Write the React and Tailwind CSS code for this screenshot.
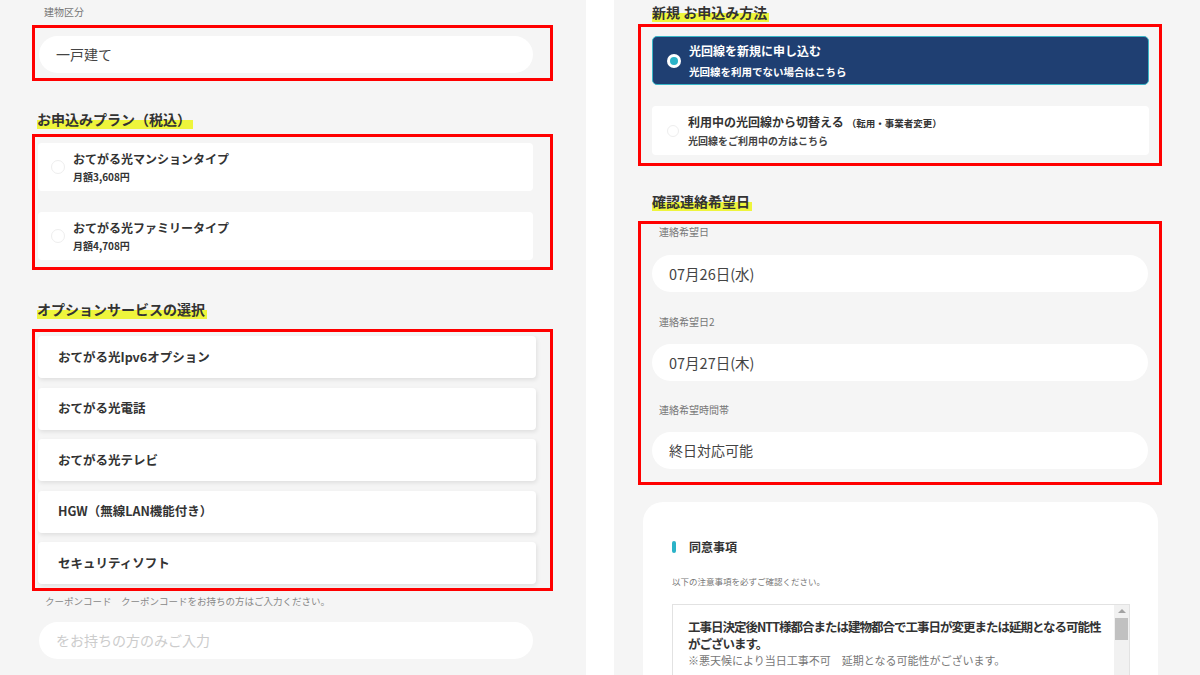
import React from "react";

const font = { fontFamily: '"Noto Sans CJK JP", "Noto Sans", sans-serif' };

const Heading = ({ children }) => (
    <h2 className="inline-block text-[14px] font-bold leading-[20px] text-[#333] bg-[linear-gradient(transparent_55%,#eef53c_55%)] pr-[2px]">
        {children}
    </h2>
);

const PlanCard = ({ title, price }) => (
    <div className="flex items-center h-[48px] bg-white rounded-[4px] pl-[13px]">
        <span className="w-[14px] h-[14px] rounded-full border border-[#eeeeee] bg-white"></span>
        <div className="ml-[8px] flex flex-col">
            <span className="text-[12px] font-bold leading-[18px] text-[#333]">{title}</span>
            <span className="mt-[1px] text-[10px] font-bold leading-[16px] text-[#333]">{price}</span>
        </div>
    </div>
);

const options = ["おてがる光Ipv6オプション", "おてがる光電話", "おてがる光テレビ", "HGW（無線LAN機能付き）", "セキュリティソフト"];

const Pill = ({ children, muted }) => (
    <div className={`flex items-center h-[37px] bg-white rounded-full px-[17px] text-[14px] ${muted ? "text-[#cccccc]" : "text-[#444]"}`}>
        {children}
    </div>
);

const App = () => {
    return (
        <div className="flex w-[1200px] h-[675px] overflow-hidden bg-white" style={font}>
            {/* left column */}
            <div className="w-[586px] h-full bg-[#f5f5f5] pl-[32px]">
                <p className="pl-[12px] pt-[5px] text-[10px] leading-[14px] text-[#777]">建物区分</p>
                <div className="mt-[6px] w-[521px] border-[3px] border-[#ff0000] pl-[4px] pr-[17px] pt-[8px] pb-[5px]">
                    <Pill>一戸建て</Pill>
                </div>

                <div className="mt-[25px] pl-[5px]">
                    <Heading>お申込みプラン（税込）</Heading>
                </div>
                <div className="mt-[4px] w-[521px] border-[3px] border-[#ff0000] pl-[3px] pr-[17px] pt-[6px] pb-[7px] flex flex-col gap-[21px]">
                    <PlanCard title="おてがる光マンションタイプ" price="月額3,608円" />
                    <PlanCard title="おてがる光ファミリータイプ" price="月額4,708円" />
                </div>

                <div className="mt-[26px] pl-[5px]">
                    <Heading>オプションサービスの選択</Heading>
                </div>
                <div className="mt-[9px] w-[521px] border-[3px] border-[#ff0000] pl-[3px] pr-[14px] pt-[4px] pb-[4px] flex flex-col gap-[9.5px]">
                    {options.map((o) => (
                        <div key={o} className="flex items-center h-[42px] bg-white rounded-[4px] pl-[20px] shadow-[1px_2px_4px_rgba(0,0,0,0.09)] text-[12.5px] font-bold text-[#333]">
                            {o}
                        </div>
                    ))}
                </div>

                <p className="pl-[13px] mt-[3px] text-[9.5px] leading-[14px] text-[#888]">クーポンコード　クーポンコードをお持ちの方はご入力ください。</p>
                <div className="mt-[14px] w-[501px] pl-[7px]">
                    <Pill muted>をお持ちの方のみご入力</Pill>
                </div>
            </div>

            {/* gap */}
            <div className="w-[28px] h-full bg-white"></div>

            {/* right column */}
            <div className="flex-1 h-full bg-[#f5f5f5] pl-[24px]">
                <div className="-mt-[1px] pl-[14px]">
                    <Heading>新規 お申込み方法</Heading>
                </div>
                <div className="mt-[1px] w-[524px] border-[3px] border-[#ff0000] pl-[11px] pr-[10px] pt-[9px] pb-[8px] flex flex-col gap-[21px]">
                    <div className="flex items-center h-[49px] rounded-[5px] bg-[#1f3f72] border border-[#38b6c8] pl-[14px]">
                        <span className="flex items-center justify-center w-[14px] h-[14px] rounded-full bg-white">
                            <span className="w-[8px] h-[8px] rounded-full bg-[#2bb3c8]"></span>
                        </span>
                        <div className="ml-[8px] flex flex-col">
                            <span className="text-[12px] font-bold leading-[18px] text-white">光回線を新規に申し込む</span>
                            <span className="mt-[3px] text-[10.5px] font-bold leading-[17px] text-white">光回線を利用でない場合はこちら</span>
                        </div>
                    </div>
                    <div className="flex items-center h-[49px] rounded-[4px] bg-white pl-[15px] overflow-hidden">
                        <span className="w-[12px] h-[12px] rounded-full border border-[#eeeeee]"></span>
                        <div className="ml-[9px] flex flex-col">
                            <span className="text-[12px] font-bold leading-[18px] text-[#333]">
                                利用中の光回線から切替える<span className="text-[9.5px] ml-[3px]">（転用・事業者変更）</span>
                            </span>
                            <span className="text-[10px] font-bold leading-[17px] text-[#444]">光回線をご利用中の方はこちら</span>
                        </div>
                    </div>
                </div>

                <div className="mt-[22px] pl-[14px]">
                    <Heading>確認連絡希望日</Heading>
                </div>
                <div className="mt-[9px] w-[524px] border-[3px] border-[#ff0000] pl-[11px] pr-[11px] pt-[1px] pb-[13px]">
                    <p className="pl-[7px] text-[10px] leading-[14px] text-[#777]">連絡希望日</p>
                    <div className="mt-[16px]"><Pill><span className="text-[14.5px]">07月26日(水)</span></Pill></div>
                    <p className="mt-[23px] pl-[7px] text-[10px] leading-[14px] text-[#777]">連絡希望日2</p>
                    <div className="mt-[15px]"><Pill><span className="text-[14.5px]">07月27日(木)</span></Pill></div>
                    <p className="mt-[22px] pl-[7px] text-[10px] leading-[14px] text-[#777]">連絡希望時間帯</p>
                    <div className="mt-[15px]"><Pill>終日対応可能</Pill></div>
                </div>

                <div className="mt-[17px] ml-[5px] w-[515px] h-[200px] bg-white rounded-[20px] pl-[29px] pr-[28px] pt-[36px]">
                    <div className="flex items-center">
                        <span className="w-[4px] h-[12px] rounded-full bg-[#2bb3c8]"></span>
                        <span className="ml-[13px] text-[12px] font-bold text-[#333]">同意事項</span>
                    </div>
                    <p className="mt-[19px] text-[8.5px] text-[#777]">以下の注意事項を必ずご確認ください。</p>
                    <div className="mt-[16px] flex h-[90px] border border-[#e2e2e2]">
                        <div className="flex-1 pl-[15px] pt-[13px] pr-[2px]">
                            <p className="text-[12.5px] font-bold leading-[17px] tracking-[-1px] text-[#333]">工事日決定後NTT様都合または建物都合で工事日が変更または延期となる可能性がございます。</p>
                            <p className="text-[11px] leading-[17px] text-[#777]">※悪天候により当日工事不可　延期となる可能性がございます。</p>
                        </div>
                        <div className="w-[15px] bg-[#f1f1f1] flex flex-col items-center">
                            <span className="mt-[4px] w-0 h-0 border-l-[4px] border-r-[4px] border-b-[4px] border-l-transparent border-r-transparent border-b-[#a3a3a3]"></span>
                            <span className="mt-[5px] w-[13px] h-[22px] bg-[#c1c1c1]"></span>
                        </div>
                    </div>
                </div>
            </div>
        </div>
    );
};

export default App;
